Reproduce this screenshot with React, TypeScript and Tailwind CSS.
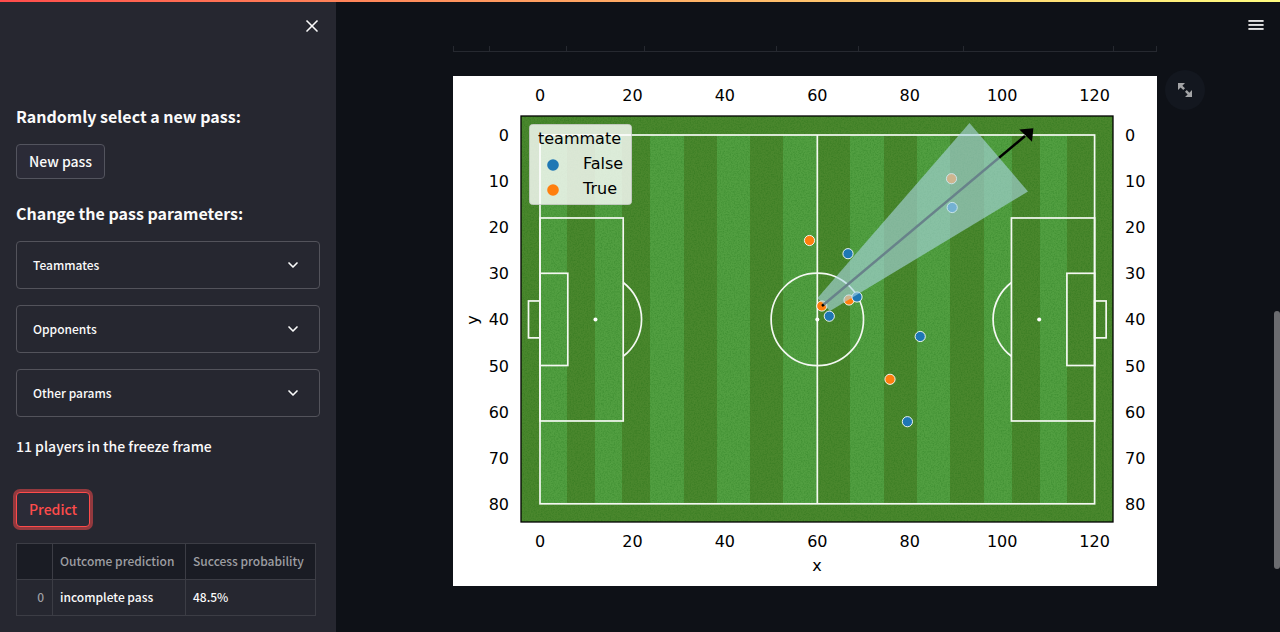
import React from "react";
import { ChevronDown, X } from "lucide-react";

const px = (x: number) => 87 + x * 4.622;
const py = (y: number) => 59 + y * 4.61;

const X_TICKS = [0, 20, 40, 60, 80, 100, 120];
const Y_TICKS = [0, 10, 20, 30, 40, 50, 60, 70, 80];

const STRIPES = [
  [87, 114],
  [142, 169],
  [197, 231],
  [264, 297],
  [330, 364],
  [397, 431],
  [464, 497],
  [531, 559],
  [587, 614],
];

const BLUE = "#1f77b4";
const ORANGE = "#ff7f0e";

const PLAYERS = [
  { x: 356.5, y: 164.5, teammate: true },
  { x: 498.5, y: 102.7, teammate: true },
  { x: 499.2, y: 131.5, teammate: false },
  { x: 395, y: 177.7, teammate: false },
  { x: 396, y: 224, teammate: true },
  { x: 404, y: 221, teammate: false },
  { x: 368.8, y: 230, teammate: true },
  { x: 376.3, y: 240.2, teammate: false },
  { x: 467.2, y: 260.5, teammate: false },
  { x: 437, y: 303.3, teammate: true },
  { x: 454.4, y: 345.7, teammate: false },
];

const GRID_COLUMNS = [35, 77, 78, 133, 82, 105, 151, 42];

function Pitch() {
  return (
    <svg
      viewBox="0 0 704 510"
      role="img"
      aria-label="Pass map with teammates and opponents"
      className="block w-full bg-white font-['DejaVu_Sans',sans-serif]"
      fontSize="16"
    >
      <defs>
        <filter id="grass" x="0" y="0" width="100%" height="100%">
          <feTurbulence type="fractalNoise" baseFrequency="0.7" numOctaves="2" seed="4" />
          <feColorMatrix values="0 0 0 0 0  0 0 0 0 0.1  0 0 0 0 0  0.45 0 0 0 -0.17" />
        </filter>
      </defs>

      <rect x="68" y="40" width="592" height="406" fill="#4a872d" />
      {STRIPES.map(([a, b]) => (
        <rect key={a} x={a} y="59" width={b - a} height="369" fill="#529f41" />
      ))}
      <rect x="68" y="40" width="592" height="406" filter="url(#grass)" />
      <rect x="68" y="40" width="592" height="406" fill="none" stroke="#000" strokeWidth="1.3" />

      <g fill="none" stroke="#f4f8f2" strokeWidth="1.7">
        <rect x={px(0)} y={py(0)} width={554.6} height={368.8} />
        <path d={`M${px(60)} ${py(0)}V${py(80)}`} />
        <rect x={px(0)} y={py(18)} width={83.2} height={203} />
        <rect x={px(102)} y={py(18)} width={83.2} height={203} />
        <rect x={px(0)} y={py(30)} width={27.8} height={92.2} />
        <rect x={px(114)} y={py(30)} width={27.8} height={92.2} />
        <rect x={75.5} y={py(36)} width={11.5} height={36.9} />
        <rect x={px(120)} y={py(36)} width={11.5} height={36.9} />
        <circle cx={px(60)} cy={py(40)} r="46.2" />
        <path d={`M${px(18)} ${py(32)}A46.2 46.2 0 0 1 ${px(18)} ${py(48)}`} />
        <path d={`M${px(102)} ${py(32)}A46.2 46.2 0 0 0 ${px(102)} ${py(48)}`} />
      </g>
      <g fill="#fff">
        <circle cx={px(60)} cy={py(40)} r="2" />
        <circle cx={px(12)} cy={py(40)} r="2" />
        <circle cx={px(108)} cy={py(40)} r="2" />
      </g>

      {PLAYERS.map((p) => (
        <circle
          key={`${p.x}-${p.y}`}
          cx={p.x}
          cy={p.y}
          r="5.1"
          fill={p.teammate ? ORANGE : BLUE}
          stroke="#fff"
          strokeWidth="0.9"
        />
      ))}

      <path d="M369 230L572 60" stroke="#000" strokeWidth="2.5" fill="none" />
      <path d="M580.4 52.3L566.3 53.4L579 65.7Z" fill="#000" />
      <path d="M364.5 222L516.5 47L575 115.5L377 235Z" fill="#add8e6" fillOpacity="0.6" />

      <rect
        x="76.5"
        y="48.5"
        width="102"
        height="80"
        rx="3"
        fill="#fff"
        fillOpacity="0.8"
        stroke="#ccc"
        strokeOpacity="0.8"
      />
      <text x="85" y="68">teammate</text>
      <circle cx="100" cy="89" r="5.8" fill={BLUE} />
      <circle cx="100" cy="114" r="5.8" fill={ORANGE} />
      <text x="130" y="93">False</text>
      <text x="130" y="118">True</text>

      {X_TICKS.map((t) => (
        <g key={t} textAnchor="middle">
          <text x={px(t)} y="25">{t}</text>
          <text x={px(t)} y="471">{t}</text>
        </g>
      ))}
      {Y_TICKS.map((t) => (
        <g key={t}>
          <text x="56" y={py(t) + 6} textAnchor="end">{t}</text>
          <text x="672" y={py(t) + 6}>{t}</text>
        </g>
      ))}
      <text x="364" y="495" textAnchor="middle">x</text>
      <text transform="translate(25 244) rotate(-90)" textAnchor="middle">y</text>
    </svg>
  );
}

function Expander({ label }: { label: string }) {
  return (
    <button
      type="button"
      aria-expanded="false"
      className="flex h-12 w-full items-center justify-between rounded border border-[#53535b] pr-[18px] pl-4 text-xs leading-5 font-medium"
    >
      {label}
      <ChevronDown size={16} strokeWidth={2.5} />
    </button>
  );
}

export default function App() {
  return (
    <div className="flex h-screen flex-col overflow-hidden bg-[#0e1117] font-['Noto_Sans_CJK_SC',sans-serif] text-[#fafafa]">
      <div className="h-0.5 shrink-0 bg-linear-to-r from-[#ff4b4b] to-[#fffd80]" />
      <div className="flex min-h-0 flex-1">
        <aside className="flex w-84 shrink-0 flex-col bg-[#262730] px-4">
          <div className="-mr-0.5 flex h-12 shrink-0 items-center justify-end">
            <button type="button" aria-label="Close sidebar">
              <X size={20} />
            </button>
          </div>
          <h2 className="mt-13 text-base leading-7 font-bold">Randomly select a new pass:</h2>
          <button
            type="button"
            className="mt-3.5 h-[35px] self-start rounded border border-[#53545e] bg-[#2b2b37] px-3 pb-0.5 text-sm leading-6 font-medium"
          >
            New pass
          </button>
          <h2 className="mt-5 text-base leading-7 font-bold">Change the pass parameters:</h2>
          <div className="mt-3.5 flex flex-col gap-4">
            <Expander label="Teammates" />
            <Expander label="Opponents" />
            <Expander label="Other params" />
          </div>
          <p className="mt-[17px] text-sm leading-6 font-medium">11 players in the freeze frame</p>
          <button
            type="button"
            className="mt-[34px] h-[35px] self-start rounded border border-[#ff4b4b] bg-[#2b2b37] px-3 pb-0.5 text-sm leading-6 font-medium text-[#ff4b4b] ring-3 ring-[#ff4b4b]/50"
          >
            Predict
          </button>
          <table className="mt-4 w-[300px] table-fixed border-collapse text-left text-xs leading-5 font-medium">
            <colgroup>
              <col className="w-9" />
              <col className="w-[133px]" />
              <col />
            </colgroup>
            <thead className="bg-[#1a1c24] text-[#9d9ea2]">
              <tr className="h-9">
                <td className="border border-[#3c3d45]" />
                <th scope="col" className="border border-[#3c3d45] px-[7px] pb-0.5 font-medium whitespace-nowrap">
                  Outcome prediction
                </th>
                <th scope="col" className="border border-[#3c3d45] px-[7px] pb-0.5 font-medium whitespace-nowrap">
                  Success probability
                </th>
              </tr>
            </thead>
            <tbody>
              <tr className="h-9">
                <th scope="row" className="border border-[#3c3d45] px-2 pb-0.5 text-right font-medium text-[#9d9ea2]">
                  0
                </th>
                <td className="border border-[#3c3d45] px-[7px] pb-0.5">incomplete pass</td>
                <td className="border border-[#3c3d45] px-[7px] pb-0.5">48.5%</td>
              </tr>
            </tbody>
          </table>
        </aside>

        <div className="flex min-w-0 flex-1 flex-col">
          <header className="flex h-11 shrink-0 items-center justify-end px-4">
            <button type="button" aria-label="Main menu">
              <svg width="16" height="16" viewBox="0 0 16 16" fill="#fafafa" className="block">
                <rect x="0.4" y="4.1" width="15.2" height="1.7" />
                <rect x="0.4" y="8.1" width="15.2" height="1.7" />
                <rect x="0.4" y="12.1" width="15.2" height="1.7" />
              </svg>
            </button>
          </header>
          <main className="flex min-h-0 flex-1">
            <div className="flex min-w-0 flex-1 flex-col items-center">
              <div className="w-full max-w-[704px]">
                <div className="flex h-1.5 border-b border-l border-[#262930]">
                  {GRID_COLUMNS.map((w, i) => (
                    <div key={i} className="border-r border-[#262930]" style={{ flexGrow: w, flexBasis: 0 }} />
                  ))}
                </div>
                <div className="relative mt-6">
                  <Pitch />
                  <button
                    type="button"
                    aria-label="View fullscreen"
                    className="absolute -top-1.5 -right-12 flex size-10 items-center justify-center rounded-full bg-[#13171f] text-[#a3a4a6]"
                  >
                    <svg width="14" height="14" viewBox="0 0 8 8" fill="currentColor">
                      <path d="M0 0v4l1.5-1.5L3 4l1-1-1.5-1.5L4 0H0zM6.5 5.5L5 4 4 5l1.5 1.5L4 8h4V4L6.5 5.5z" />
                    </svg>
                  </button>
                </div>
              </div>
            </div>
            <div className="w-1.5 shrink-0 pt-[265px]">
              <div className="h-[258px] rounded-full bg-[#6b6c70]" />
            </div>
          </main>
        </div>
      </div>
    </div>
  );
}
